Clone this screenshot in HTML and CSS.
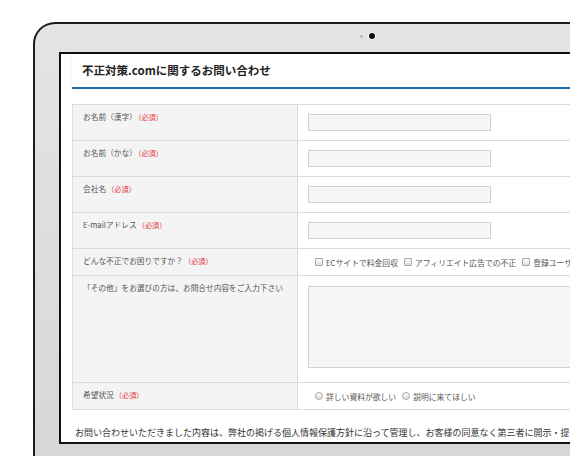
FILE: index.html
```html
<!DOCTYPE html>
<html lang="ja">
<head>
  <meta charset="UTF-8" />
  <meta name="viewport" content="width=device-width, initial-scale=1.0"/>
  <title>不正対策.comに関するお問い合わせ</title>
  <link rel="stylesheet" href="styles.css">
</head>
<body>
  <div class="laptop">
    <div class="bezel-top">
      <span class="sensor"></span>
      <span class="camera"></span>
    </div>
    <div class="screen">
      <div class="page">
        <h1 class="page-title">不正対策.comに関するお問い合わせ</h1>
        <table class="form-table">
          <tr>
            <th>お名前（漢字）<span class="req">（必須）</span></th>
            <td><input type="text" class="field" /></td>
          </tr>
          <tr>
            <th>お名前（かな）<span class="req">（必須）</span></th>
            <td><input type="text" class="field" /></td>
          </tr>
          <tr>
            <th>会社名<span class="req">（必須）</span></th>
            <td><input type="text" class="field" /></td>
          </tr>
          <tr>
            <th>E-mailアドレス<span class="req">（必須）</span></th>
            <td><input type="text" class="field" /></td>
          </tr>
          <tr class="row-short">
            <th>どんな不正でお困りですか？<span class="req">（必須）</span></th>
            <td>
              <div class="choices">
                <label class="choice"><span class="box"></span>ECサイトで料金回収</label>
                <label class="choice"><span class="box"></span>アフィリエイト広告での不正</label>
                <label class="choice"><span class="box"></span>登録ユーザーの不正</label>
              </div>
            </td>
          </tr>
          <tr class="row-area">
            <th>「その他」をお選びの方は、お問合せ内容をご入力下さい</th>
            <td><textarea class="area"></textarea></td>
          </tr>
          <tr class="row-short">
            <th>希望状況<span class="req">（必須）</span></th>
            <td>
              <div class="choices">
                <label class="choice"><span class="dot"></span>詳しい資料が欲しい</label>
                <label class="choice"><span class="dot"></span>説明に来てほしい</label>
              </div>
            </td>
          </tr>
        </table>
        <p class="note">お問い合わせいただきました内容は、弊社の掲げる個人情報保護方針に沿って管理し、お客様の同意なく第三者に開示・提供することはありません。</p>
      </div>
    </div>
  </div>
</body>
</html>
```

FILE: styles.css
```css
body {
  margin: 0;
  overflow: hidden;
  background-color: #fff;
  font-family: "Noto Sans CJK JP", sans-serif;
}
.laptop {
  margin: 22px 0 0 33px;
  width: 678px;
  height: 470px;
  box-sizing: border-box;
  padding: 0 24px;
  border: 2px solid #1c1c1c;
  border-bottom: none;
  border-radius: 22px 22px 0 0;
  background: linear-gradient(#e4e4e4, #d6d6d6);
}
.bezel-top {
  height: 28px;
  display: flex;
  justify-content: center;
  align-items: flex-start;
  padding-top: 9px;
  box-sizing: border-box;
}
.sensor {
  width: 3px;
  height: 3px;
  margin-top: 1.5px;
  margin-right: 6px;
  border-radius: 50%;
  background-color: #b5b5b5;
}
.camera {
  width: 6px;
  height: 6px;
  margin-right: 9px;
  border-radius: 50%;
  background-color: #111;
  box-shadow: 0 0 0 1px #f2f2f2;
}
.screen {
  height: 392px;
  box-sizing: border-box;
  border: 2px solid #111;
  background-color: #fff;
  overflow: hidden;
}
.page {
  padding-left: 11px;
}
.page-title {
  margin: 0;
  height: 33px;
  line-height: 33px;
  padding-left: 10px;
  font-size: 11.5px;
  font-weight: bold;
  color: #222;
  border-bottom: 2px solid #1f6ab3;
  box-shadow: -1px 0 2px rgba(0, 0, 0, 0.06);
}
.form-table {
  margin-top: 15px;
  width: 640px;
  border-collapse: collapse;
}
.form-table th,
.form-table td {
  border: 1px solid #dcdcdc;
}
.form-table th {
  width: 204px;
  min-width: 204px;
  padding: 6px 10px;
  vertical-align: top;
  text-align: left;
  white-space: nowrap;
  background-color: #f4f4f4;
  font-size: 7.7px;
  line-height: 12px;
  font-weight: normal;
  color: #555;
}
.form-table td {
  padding: 9px 10px;
  vertical-align: middle;
}
.req {
  margin-left: 1px;
  color: #e4383e;
  font-size: 7.2px;
}
.field {
  display: block;
  width: 183px;
  height: 17px;
  box-sizing: border-box;
  margin: 0;
  border: 1px solid #d2d2d2;
  background-color: #f6f6f6;
}
.row-short td {
  padding: 0 10px;
  height: 26px;
}
.row-area td {
  padding: 10px 10px 14px;
}
.area {
  display: block;
  width: 400px;
  height: 82px;
  box-sizing: border-box;
  margin: 0;
  border: 1px solid #d2d2d2;
  background-color: #f6f6f6;
  resize: none;
}
.choices {
  display: flex;
  gap: 6px;
  margin-left: 7px;
  white-space: nowrap;
}
.choice {
  display: flex;
  align-items: center;
  gap: 3px;
  font-size: 7.8px;
  color: #555;
}
.box,
.dot {
  width: 6px;
  height: 6px;
  border: 1px solid #a8a8a8;
  background: linear-gradient(#fff, #ddd);
}
.box {
  border-radius: 1px;
}
.dot {
  border-radius: 50%;
}
.note {
  margin: 15px 0 0 3px;
  width: 560px;
  font-size: 9px;
  line-height: 16px;
  color: #333;
}
```
